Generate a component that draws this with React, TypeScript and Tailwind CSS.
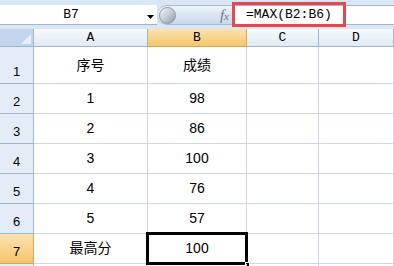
import React from 'react';

const cols = [
  { name: 'A', w: 'w-[114px]' },
  { name: 'B', w: 'w-[99px]' },
  { name: 'C', w: 'w-[72px]' },
  { name: 'D', w: 'w-[75px]' },
];

const rows = [
  { n: 1, a: '序号', b: '成绩', h: 'h-[37px]' },
  { n: 2, a: '1', b: '98', h: 'h-[30px]' },
  { n: 3, a: '2', b: '86', h: 'h-[30px]' },
  { n: 4, a: '3', b: '100', h: 'h-[30px]' },
  { n: 5, a: '4', b: '76', h: 'h-[30px]' },
  { n: 6, a: '5', b: '57', h: 'h-[30px]' },
  { n: 7, a: '最高分', b: '100', h: 'h-[30px]' },
  { n: 8, a: '', b: '', h: 'h-[30px]' },
];

const cellFont = { fontFamily: '"Liberation Sans", "Noto Sans CJK SC", sans-serif' };
const monoFont = { fontFamily: '"Liberation Mono", "Noto Sans CJK SC", monospace' };

function FormulaBar() {
  return (
    <div className="flex h-[29px] bg-[#dbe6f4] pt-[5px] pb-[4px] relative">
      {/* name box */}
      <div className="relative flex w-[157px] items-center bg-white border-b border-[#a3b5cc]">
        <span className="w-[142px] text-center text-[13px] text-black" style={monoFont}>B7</span>
        <svg width="7" height="4" viewBox="0 0 7 4" className="absolute left-[147px] top-[10px]">
          <path d="M0 0 H7 L3.5 4 Z" fill="#000" />
        </svg>
      </div>
      {/* button strip */}
      <div className="flex w-[75px] items-center rounded-l-full bg-gradient-to-b from-[#eef3fa] to-[#c9d8ec] border-y border-[#a9bcd5] pl-[2px]">
        <div className="h-[17px] w-[17px] rounded-full bg-gradient-to-br from-[#f4f6f9] via-[#c6ccd5] to-[#8e99a8] border border-[#8c98aa]" />
        <span
          className="ml-auto mr-[3px] text-[15px] italic text-[#6b7789]"
          style={{ fontFamily: '"Liberation Serif", serif' }}
        >
          f<span className="text-[11px]">x</span>
        </span>
      </div>
      {/* formula input */}
      <div className="flex flex-1 items-center bg-white border-y border-[#a3b5cc]">
        <span className="pl-[14px] text-[13px] text-black" style={monoFont}>=MAX(B2:B6)</span>
      </div>
      <div className="absolute left-[232px] top-[2px] h-[25px] w-[114px] border-[3px] border-[#e8474c]" />
    </div>
  );
}

export default function App() {
  return (
    <div className="w-[394px] h-[266px] overflow-hidden bg-white">
      <FormulaBar />
      {/* column headers */}
      <div className="flex h-[18px]">
        <div className="relative w-[34px] bg-[#c3d5ee] border-r border-b border-[#9eb6ce]">
          <svg width="10" height="10" viewBox="0 0 10 10" className="absolute right-[2px] bottom-[2px]">
            <path d="M10 0 V10 H0 Z" fill="#e8eef8" />
          </svg>
        </div>
        {cols.map((c) => (
          <div
            key={c.name}
            className={`${c.w} flex items-center justify-center border-r border-b text-[13px] ${
              c.name === 'B'
                ? 'bg-gradient-to-b from-[#fbe2ae] to-[#f4c66b] border-[#d8a74e]'
                : 'bg-gradient-to-b from-[#f8fafd] to-[#e2e9f3] border-[#9eb6ce]'
            }`}
            style={monoFont}
          >
            {c.name}
          </div>
        ))}
      </div>
      {rows.map((r) => (
        <div key={r.n} className={`flex ${r.h}`}>
          <div
            className={`w-[34px] flex items-end justify-center pb-[2px] border-r border-b text-[13px] ${
              r.n === 7
                ? 'bg-gradient-to-b from-[#fbe2ae] to-[#f4c66b] border-[#d8a74e]'
                : 'bg-[#e4ecf7] border-[#9eb6ce]'
            }`}
            style={cellFont}
          >
            {r.n < 8 ? r.n : ''}
          </div>
          <div className="w-[114px] flex items-center justify-center border-r border-b border-[#d0d7e5] text-[14px] text-black" style={cellFont}>
            {r.a}
          </div>
          <div className="relative w-[99px] flex items-center justify-center border-r border-b border-[#d0d7e5] text-[14px] text-black" style={cellFont}>
            {r.b}
            {r.n === 7 && (
              <>
                <div className="absolute -left-[2px] -top-[2px] -right-[2px] -bottom-[2px] border-[3px] border-black" />
                <div className="absolute -right-[4px] -bottom-[4px] h-[5px] w-[5px] bg-black border border-white" />
              </>
            )}
          </div>
          <div className="w-[72px] border-r border-b border-[#d0d7e5]" />
          <div className="w-[75px] border-r border-b border-[#d0d7e5]" />
        </div>
      ))}
    </div>
  );
}
